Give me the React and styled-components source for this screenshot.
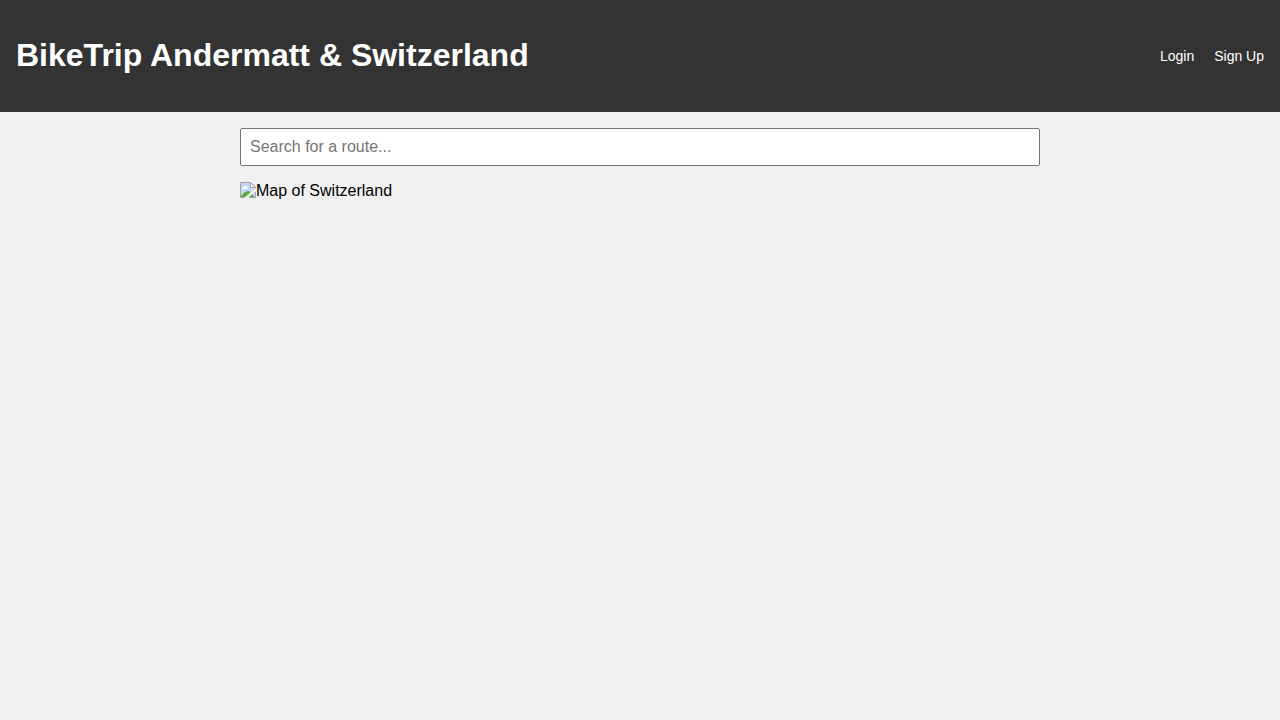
import React from "react";
import styled, { createGlobalStyle } from "styled-components";

const GlobalStyle = createGlobalStyle`
  *, *::before, *::after {
    box-sizing: border-box;
  }

  body {
    margin: 0;
    background: #f0f0f0;
    color: #000;
    font-family: "Liberation Sans", Arial, sans-serif;
    font-size: 16px;
  }
`;

const Header = styled.header`
  display: flex;
  align-items: center;
  justify-content: space-between;
  padding: 37px 16px 38px;
  background: #333;
  color: #fff;
`;

const Title = styled.h1`
  margin: 0;
  font-size: 32px;
  line-height: 37px;
  font-weight: bold;
`;

const Nav = styled.nav`
  display: flex;
  gap: 20px;
`;

const NavLink = styled.a`
  color: #fff;
  font-size: 14px;
  line-height: 16px;
  text-decoration: none;
`;

const Main = styled.main`
  display: flex;
  flex-direction: column;
  gap: 16px;
  max-width: 832px;
  margin: 0 auto;
  padding: 16px;
`;

const SearchInput = styled.input`
  width: 100%;
  height: 38px;
  padding: 8px;
  font-family: inherit;
  font-size: 16px;
`;

const MapPlaceholder = styled.div`
  display: flex;
  align-items: flex-start;
  line-height: 18px;
`;

const MapIcon = styled.svg`
  flex: none;
  width: 16px;
  height: 16px;
`;

function BrokenImageIcon() {
  return (
    <MapIcon viewBox="0 0 16 16" aria-hidden="true">
      <path d="M1 1H11L15 5V15H1Z" fill="#c3d5f8" />
      <path d="M3 7Q2 7 2 6Q2 5 3.5 5Q4 3.5 5.3 3.5Q6.5 3.5 7 5Q8 5 8 6Q8 7 7 7Z" fill="#fff" />
      <path d="M1 15V14Q4 10 7.5 9Q11 9.5 14 15Z" fill="#58ab3b" />
      <path d="M4 16L15 6.5H16V9L8 16Z" fill="#f0f0f0" />
      <path d="M4.5 15.5H0.5V0.5H10.5L15.5 5V6.5" fill="none" stroke="#a3a3a3" />
      <path d="M10.5 0.5V5.5H15.5Z" fill="#fff" stroke="#a3a3a3" />
      <path d="M15.5 10V15.5H9" fill="none" stroke="#a3a3a3" />
    </MapIcon>
  );
}

export default function App() {
  return (
    <>
      <GlobalStyle />
      <Header>
        <Title>BikeTrip Andermatt &amp; Switzerland</Title>
        <Nav aria-label="Account">
          <NavLink href="#login">Login</NavLink>
          <NavLink href="#signup">Sign Up</NavLink>
        </Nav>
      </Header>
      <Main>
        <SearchInput
          type="text"
          aria-label="Search for a route"
          placeholder="Search for a route..."
        />
        <MapPlaceholder>
          <BrokenImageIcon />
          <span>Map of Switzerland</span>
        </MapPlaceholder>
      </Main>
    </>
  );
}
